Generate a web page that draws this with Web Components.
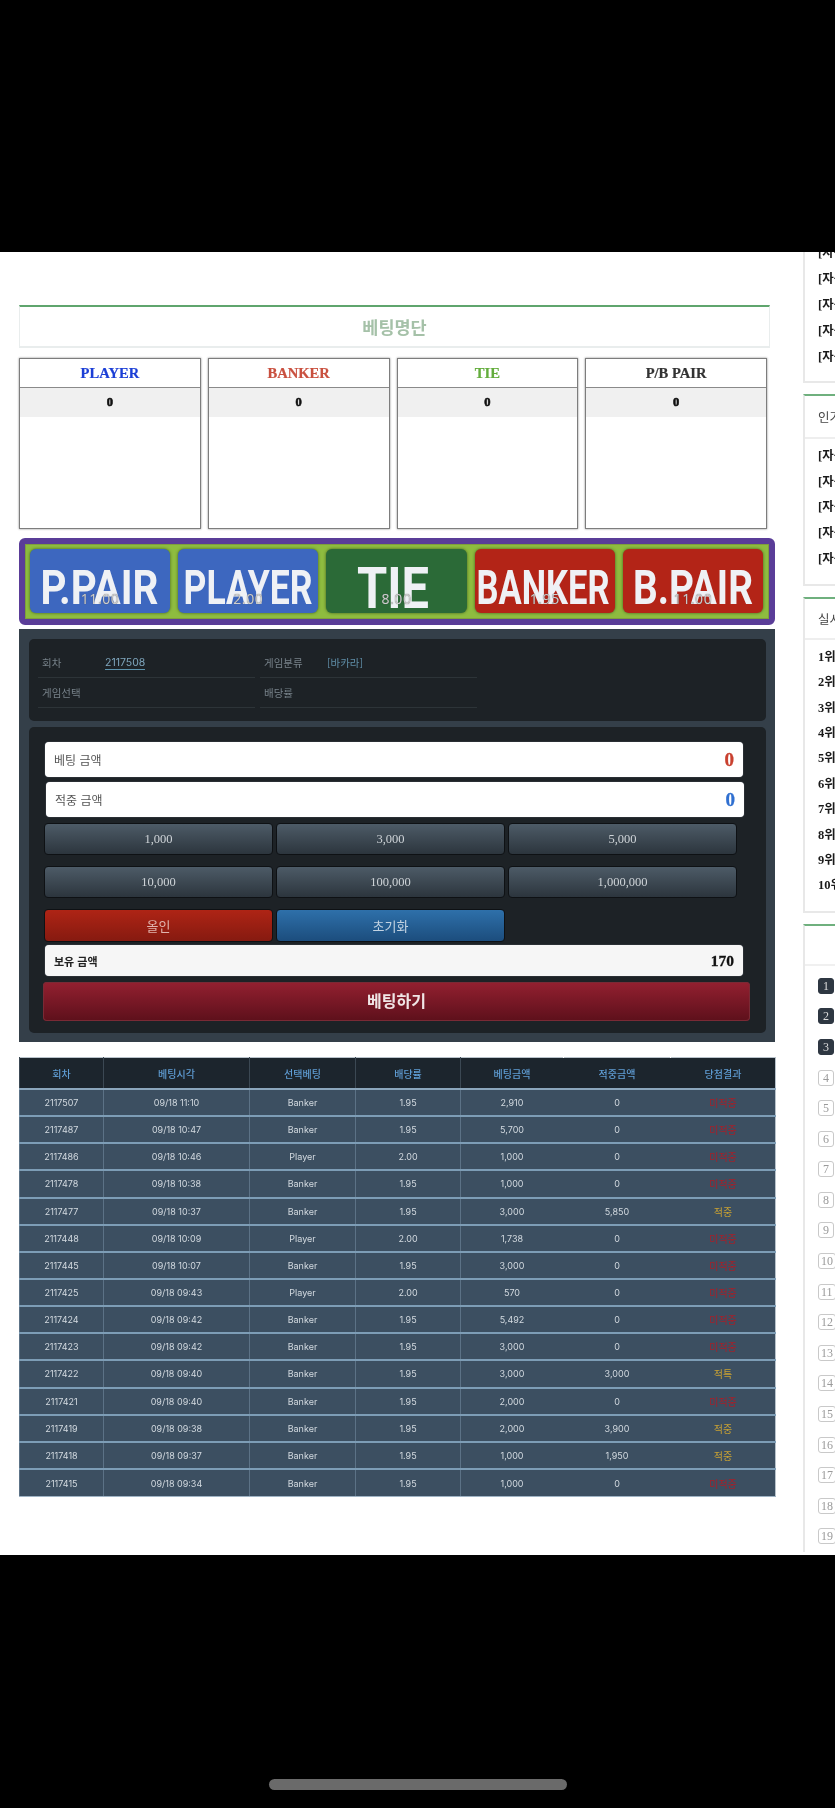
<!DOCTYPE html>
<html lang="ko">
<head>
<meta charset="utf-8">
<title>베팅</title>
<style>
  html, body { margin: 0; padding: 0; background: #000; }
  body { width: 835px; height: 1808px; overflow: hidden; font-family: "Noto Sans CJK KR", "Noto Sans", sans-serif; }
</style>
</head>
<body>
<phone-frame>
  <main-column slot="main">
    <title-bar>베팅명단</title-bar>
    <card-row>
      <bet-card label="PLAYER" color="#1c3fd6"></bet-card>
      <bet-card label="BANKER" color="#c9503f"></bet-card>
      <bet-card label="TIE" color="#63ad3c"></bet-card>
      <bet-card label="P/B PAIR" color="#333"></bet-card>
    </card-row>
    <bet-banner>
      <odds-button label="P.PAIR" odds="11.00" bg="#3d67bf" len="118" cx="69.5"></odds-button>
      <odds-button label="PLAYER" odds="2.00" bg="#3d67bf" len="129" cx="70"></odds-button>
      <odds-button label="TIE" odds="8.00" bg="#2b6a37" len="72" cx="67" size="58" base="59"></odds-button>
      <odds-button label="BANKER" odds="1.95" bg="#b32417" len="133" cx="68"></odds-button>
      <odds-button label="B.PAIR" odds="11.00" bg="#b32417" len="120" cx="70"></odds-button>
    </bet-banner>
    <control-panel>
      <round-info></round-info>
      <bet-form></bet-form>
    </control-panel>
    <history-table></history-table>
  </main-column>
  <side-column slot="side">
    <side-box items="[자동],[자동],[자동],[자동],[자동]" pitch="26" lead="6" tail="11"></side-box>
    <side-box heading="인기글" headh="41" items="[자동],[자동],[자동],[자동],[자동]" pitch="25.7" lead="5" tail="11.4"></side-box>
    <side-box heading="실시간" headh="39" items="1위,2위,3위,4위,5위,6위,7위,8위,9위,10위" pitch="25.4" lead="5" tail="12.7"></side-box>
    <number-box></number-box>
  </side-column>
</phone-frame>

<script>
// small helper so each element keeps its markup and css together
function shadow (el, html) {
  el.attachShadow({ mode: 'open' }).innerHTML = html
}

customElements.define('phone-frame', class extends HTMLElement {
  connectedCallback () {
    shadow(this, `
      <style>
        :host { display: flex; flex-direction: column; width: 835px; height: 1808px; background: #000; }
        .top { height: 252px; flex: none; }
        .page { height: 1303px; flex: none; background: #fff; display: flex; overflow: hidden; filter: blur(.45px); }
        .bottom { flex: 1; display: flex; justify-content: center; align-items: flex-end; padding-bottom: 18px; }
        .home { width: 298px; height: 11px; border-radius: 6px; background: #6a6a6a; }
      </style>
      <div class="top"></div>
      <div class="page">
        <slot name="main"></slot>
        <slot name="side"></slot>
      </div>
      <div class="bottom"><div class="home"></div></div>
    `)
  }
})

customElements.define('main-column', class extends HTMLElement {
  connectedCallback () {
    shadow(this, `
      <style>
        :host { display: flex; flex-direction: column; flex: none; width: 756px; margin-left: 19px; padding-top: 53px; }
      </style>
      <slot></slot>
    `)
  }
})

customElements.define('title-bar', class extends HTMLElement {
  connectedCallback () {
    shadow(this, `
      <style>
        :host { display: flex; align-items: center; justify-content: center; box-sizing: border-box; height: 43px; margin-right: 5px;
          border: 1px solid #e9eded; border-top: 2px solid #5fa56d; border-bottom-width: 2px;
          font: 700 17.5px "Noto Sans CJK KR", sans-serif; color: #a5c1a8; }
      </style>
      <slot></slot>
    `)
  }
})

customElements.define('card-row', class extends HTMLElement {
  connectedCallback () {
    shadow(this, `
      <style>
        :host { display: grid; grid-template-columns: repeat(4, 1fr); gap: 7px; margin: 10px 8px 9px 0; }
      </style>
      <slot></slot>
    `)
  }
})

customElements.define('bet-card', class extends HTMLElement {
  connectedCallback () {
    shadow(this, `
      <style>
        :host { display: block; box-sizing: border-box; height: 171px; border: 1px solid #7d7d7d; box-shadow: 0 0 2px #888; background: #fff; font-family: "Liberation Serif", serif; font-weight: 700; }
        .head { height: 28px; line-height: 28px; text-align: center; font-size: 14.6px; border-bottom: 1px solid #8a8a8a; color: ${this.getAttribute('color')}; -webkit-text-stroke: .2px ${this.getAttribute('color')}; }
        .count { height: 29px; line-height: 29px; text-align: center; font-size: 12.5px; background: #f0f0f0; color: #111; -webkit-text-stroke: .6px #111; }
      </style>
      <div class="head">${this.getAttribute('label')}</div>
      <div class="count">0</div>
    `)
  }
})

customElements.define('bet-banner', class extends HTMLElement {
  connectedCallback () {
    shadow(this, `
      <style>
        :host { display: flex; gap: 8px; box-sizing: border-box; height: 87px; padding: 5px 6px 5px 5px; background: #8ebc3f;
          border: 6px solid #5a3d98; border-radius: 6px; box-shadow: inset 0 0 0 1px #7f9f3c; }
      </style>
      <slot></slot>
    `)
  }
})

customElements.define('odds-button', class extends HTMLElement {
  connectedCallback () {
    const size = this.getAttribute('size') || 48
    const base = this.getAttribute('base') || 55
    shadow(this, `
      <style>
        :host { flex: 1; min-width: 0; position: relative; display: block; height: 64px;
          border-radius: 6px; background: ${this.getAttribute('bg')}; box-shadow: 0 0 3px rgba(30,50,20,.7); }
        svg { display: block; width: 100%; height: 64px; }
        text { font: 700 ${size}px Roboto, sans-serif; fill: #eff1f5; }
        .odds { position: absolute; left: 0; right: 0; bottom: 5px; text-align: center; font: 400 14px/18px "Open Sans", sans-serif; letter-spacing: .6px; color: #cfcfcf; text-shadow: 0 0 1px #555; }
      </style>
      <svg><text x="${this.getAttribute('cx')}" y="${base}" text-anchor="middle" textLength="${this.getAttribute('len')}" lengthAdjust="spacingAndGlyphs">${this.getAttribute('label')}</text></svg>
      <span class="odds">${this.getAttribute('odds')}</span>
    `)
  }
})

customElements.define('control-panel', class extends HTMLElement {
  connectedCallback () {
    shadow(this, `
      <style>
        :host { display: flex; flex-direction: column; gap: 6px; box-sizing: border-box; height: 413px; margin-top: 4px; padding: 10px 9px 9px 10px; background: #343f49; }
      </style>
      <slot></slot>
    `)
  }
})

customElements.define('round-info', class extends HTMLElement {
  connectedCallback () {
    shadow(this, `
      <style>
        :host { display: grid; grid-template-columns: 217px 217px; column-gap: 5px; align-content: start; box-sizing: border-box; height: 82px; padding: 9px 0 0 9px; background: #1d2226; border-radius: 5px;
          font: 400 10.5px "Noto Sans CJK KR", sans-serif; color: #77828a; }
        .cell { display: flex; align-items: center; height: 29px; border-bottom: 1px solid #2d3438; padding-left: 4px; }
        .key { width: 63px; flex: none; }
        .no { color: #7fa6bd; border-bottom: 1px solid #5d93ad; font-family: Inter, sans-serif; }
        .kind { color: #5f8ea8; }
      </style>
      <div class="cell"><span class="key">회차</span><span class="no">2117508</span></div>
      <div class="cell"><span class="key">게임분류</span><span class="kind">[바카라]</span></div>
      <div class="cell"><span class="key">게임선택</span></div>
      <div class="cell"><span class="key">배당률</span></div>
    `)
  }
})

customElements.define('bet-form', class extends HTMLElement {
  connectedCallback () {
    const chips = ['1,000', '3,000', '5,000', '10,000', '100,000', '1,000,000']
    shadow(this, `
      <style>
        :host { display: block; box-sizing: border-box; height: 306px; padding: 15px 0 0 16px; background: #1d2226; border-radius: 5px; }
        .field { display: flex; align-items: center; justify-content: space-between; box-sizing: border-box; width: 698px; height: 35px; padding: 0 9px; background: #fff; border-radius: 4px; box-shadow: 0 0 1px #9fa8b5; font: 400 12px "Noto Sans CJK KR", sans-serif; color: #555; }
        .field.win { margin: 5px 0 6px 1px; }
        .field b { font: 700 19px "Liberation Serif", serif; -webkit-text-stroke: .3px currentColor; }
        .red { color: #c9402f; }
        .blue { color: #2f6fd0; }
        .grid { display: grid; grid-template-columns: 229px 229px 229px; gap: 11px 3px; width: 693px; margin-left: -1px; }
        .chip { height: 32px; box-sizing: border-box; text-align: center; border: 1px solid #0e1114; border-radius: 4px; background: linear-gradient(#4d5b67, #2c353d); color: #cfd4d8; font: 400 12.5px/30px "Liberation Serif", serif; }
        .act { height: 33px; font: 400 13px/31px "Noto Sans CJK KR", sans-serif; }
        .allin { background: linear-gradient(#ae2415, #861a10); color: #e0b4ae; }
        .reset { background: linear-gradient(#2e70aa, #1c4d7d); color: #c3d3e2; }
        .held { width: 698px; height: 31px; margin-top: 3px; background: #f6f6f6; color: #222; font-size: 11px; font-weight: 700; }
        .held b { font-size: 15.5px; color: #111; }
        .submit { box-sizing: border-box; width: 707px; height: 39px; margin: 6px 0 0 -2px; text-align: center; border-radius: 4px; background: linear-gradient(#932030, #5d101b); color: #f0e6e6; font: 700 16px/37px "Noto Sans CJK KR", sans-serif; box-shadow: inset 0 0 0 1px #7a2a35; }
      </style>
      <div class="field"><span>베팅 금액</span><b class="red">0</b></div>
      <div class="field win"><span>적중 금액</span><b class="blue">0</b></div>
      <div class="grid">
        ${chips.map(c => `<div class="chip">${c}</div>`).join('')}
        <div class="chip act allin">올인</div>
        <div class="chip act reset">초기화</div>
      </div>
      <div class="field held"><span>보유 금액</span><b>170</b></div>
      <div class="submit">베팅하기</div>
    `)
  }
})

customElements.define('history-table', class extends HTMLElement {
  connectedCallback () {
    const head = ['회차', '베팅시각', '선택베팅', '배당률', '베팅금액', '적중금액', '당첨결과']
    const rows = [
      ['2117507', '11:10', 'Banker', '2,910', '0', '미적중'],
      ['2117487', '10:47', 'Banker', '5,700', '0', '미적중'],
      ['2117486', '10:46', 'Player', '1,000', '0', '미적중'],
      ['2117478', '10:38', 'Banker', '1,000', '0', '미적중'],
      ['2117477', '10:37', 'Banker', '3,000', '5,850', '적중'],
      ['2117448', '10:09', 'Player', '1,738', '0', '미적중'],
      ['2117445', '10:07', 'Banker', '3,000', '0', '미적중'],
      ['2117425', '09:43', 'Player', '570', '0', '미적중'],
      ['2117424', '09:42', 'Banker', '5,492', '0', '미적중'],
      ['2117423', '09:42', 'Banker', '3,000', '0', '미적중'],
      ['2117422', '09:40', 'Banker', '3,000', '3,000', '적특'],
      ['2117421', '09:40', 'Banker', '2,000', '0', '미적중'],
      ['2117419', '09:38', 'Banker', '2,000', '3,900', '적중'],
      ['2117418', '09:37', 'Banker', '1,000', '1,950', '적중'],
      ['2117415', '09:34', 'Banker', '1,000', '0', '미적중']
    ]
    const body = rows.map(r => {
      const odds = r[2] === 'Player' ? '2.00' : '1.95'
      const cls = r[5] === '미적중' ? 'miss' : 'hit'
      return `<tr><td>${r[0]}</td><td>09/18 ${r[1]}</td><td>${r[2]}</td><td>${odds}</td><td>${r[3]}</td><td>${r[4]}</td><td class="${cls}">${r[5]}</td></tr>`
    }).join('')
    shadow(this, `
      <style>
        :host { display: block; width: 756px; margin-top: 15px; font: 400 9px Inter, "Noto Sans CJK KR", sans-serif; }
        table { width: 756px; table-layout: fixed; border-collapse: collapse; border: 1px solid #b9c3cb; }
        th { height: 30px; padding: 0; background: #1c252d; color: #5f9dd4; font: 500 10px "Noto Sans CJK KR", sans-serif; border-left: 1px solid #3b4853; border-bottom: 2px solid #8ba6bc; }
        td { height: 25.15px; padding: 0; background: #3c4f61; color: #d3dae0; text-align: center; border-left: 1px solid #5c7286; border-bottom: 2px solid #7d9db6; }
        tr:last-child td { height: 26.5px; border-bottom: 1px solid #9fb3c4; }
        th:nth-child(6), td:nth-child(6), th:nth-child(7), td:nth-child(7) { border-left-color: transparent; }
        td.miss, td.hit { font: 400 10px "Noto Sans CJK KR", sans-serif; }
        td.miss { color: #a81f28; }
        td.hit { color: #c9a233; }
      </style>
      <table>
        <colgroup><col style="width:84px"><col style="width:146px"><col style="width:106px"><col style="width:105px"><col style="width:103px"><col style="width:107px"><col style="width:105px"></colgroup>
        <thead><tr>${head.map(h => `<th>${h}</th>`).join('')}</tr></thead>
        <tbody>${body}</tbody>
      </table>
    `)
  }
})

customElements.define('side-column', class extends HTMLElement {
  connectedCallback () {
    shadow(this, `
      <style>
        :host { display: flex; flex-direction: column; gap: 11px; flex: none; width: 200px; margin-left: 28px; margin-top: -19px; }
      </style>
      <slot></slot>
    `)
  }
})

customElements.define('side-box', class extends HTMLElement {
  connectedCallback () {
    const heading = this.getAttribute('heading')
    const headh = this.getAttribute('headh')
    const items = this.getAttribute('items').split(',')
    const pitch = this.getAttribute('pitch')
    const lead = this.getAttribute('lead')
    const tail = this.getAttribute('tail')
    shadow(this, `
      <style>
        :host { display: block; box-sizing: border-box; border: 1px solid #e8e8e8; border-left-width: 2px; ${heading ? 'border-top: 2px solid #6fb07e;' : ''} border-bottom-width: 2px; color: #111; }
        .head { height: ${headh}px; line-height: ${headh}px; padding-left: 13px; font-size: 12.5px; color: #444; border-bottom: 2px solid #eee; }
        .list { padding: ${lead}px 0 ${tail}px 13px; }
        .item { height: ${pitch}px; font: 700 12.5px/${pitch}px "Liberation Serif", "Noto Sans CJK KR", serif; color: #1a1a1a; white-space: nowrap; }
      </style>
      ${heading ? `<div class="head">${heading}</div>` : ''}
      <div class="list">${items.map(i => `<div class="item">${i}</div>`).join('')}</div>
    `)
  }
})

customElements.define('number-box', class extends HTMLElement {
  connectedCallback () {
    let list = ''
    for (let i = 1; i <= 19; i++) {
      list += `<div class="row"><span class="num ${i <= 3 ? 'top' : ''}">${i}</span></div>`
    }
    shadow(this, `
      <style>
        :host { display: block; box-sizing: border-box; border-left: 2px solid #e8e8e8; border-top: 2px solid #6fb07e; }
        .head { height: 38px; border-bottom: 2px solid #f0f0f0; }
        .list { padding: 4px 0 0 13px; }
        .row { height: 30.6px; display: flex; align-items: center; }
        .num { display: block; box-sizing: border-box; min-width: 16px; height: 16px; padding: 0 2px; border: 1px solid #c9c9c9; border-radius: 3px; text-align: center; font: 400 12px/14px "Liberation Serif", serif; color: #9a9a9a; }
        .top { background: #2e3742; border-color: #2e3742; color: #ddd; }
      </style>
      <div class="head"></div>
      <div class="list">${list}</div>
    `)
  }
})
</script>
</body>
</html>
